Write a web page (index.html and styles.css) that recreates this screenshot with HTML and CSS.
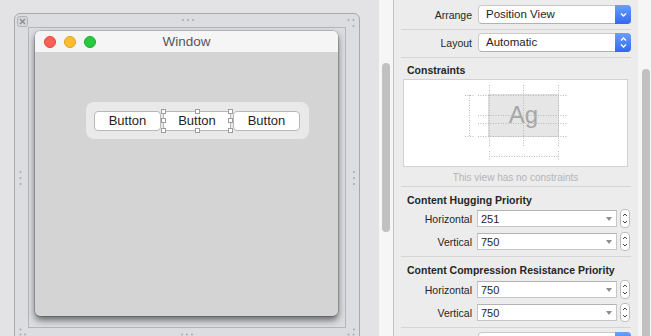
FILE: index.html
```html
<!DOCTYPE html>
<html>
<head>
<meta charset="utf-8">
<link rel="stylesheet" href="styles.css">
</head>
<body>
<div class="app">
  <div class="canvas">
    <div class="frame">
      <svg class="frame-marks" width="346" height="340" viewBox="0 0 346 340">
        <rect x="2.5" y="2.5" width="10" height="10" rx="2" fill="#d6d6d9" stroke="#b3b3b6"/>
        <path d="M5 5 L10 10 M10 5 L5 10" stroke="#8c8c8f" stroke-width="1.3"/>
        <g fill="#a9a9ad">
          <circle cx="168" cy="6" r="1"/><circle cx="173" cy="6" r="1"/><circle cx="178" cy="6" r="1"/>
          <circle cx="333.5" cy="6" r="1"/><circle cx="338.5" cy="6" r="1"/><circle cx="338.5" cy="12" r="1"/>
          <circle cx="5.5" cy="158" r="1"/><circle cx="5.5" cy="164" r="1"/><circle cx="5.5" cy="170" r="1"/>
          <circle cx="339" cy="158" r="1"/><circle cx="339" cy="164" r="1"/><circle cx="339" cy="170" r="1"/>
          <circle cx="5.5" cy="315.5" r="1"/><circle cx="339" cy="315.5" r="1"/>
          <circle cx="5.5" cy="320.5" r="1"/><circle cx="10" cy="320.5" r="1"/>
          <circle cx="167" cy="320.5" r="1"/><circle cx="172" cy="320.5" r="1"/><circle cx="177" cy="320.5" r="1"/>
          <circle cx="333.5" cy="320.5" r="1"/><circle cx="338.5" cy="320.5" r="1"/>
        </g>
      </svg>
      <div class="inner">
        <div class="window">
          <div class="titlebar">
            <div class="lights">
              <span class="light red"></span>
              <span class="light yellow"></span>
              <span class="light green"></span>
            </div>
            <div class="title">Window</div>
            <div></div>
          </div>
          <div class="wbody">
            <div class="group">
              <div class="btn">Button</div>
              <div class="btn mid selected">Button
                <span class="h tl"></span><span class="h tc"></span><span class="h tr"></span>
                <span class="h ml"></span><span class="h mr"></span>
                <span class="h bl"></span><span class="h bc"></span><span class="h br"></span>
              </div>
              <div class="btn">Button</div>
            </div>
          </div>
        </div>
      </div>
    </div>
  </div>

  <div class="vscroll left"><div class="thumb"></div></div>

  <div class="inspector">
    <div class="prow first">
      <div class="label">Arrange</div>
      <div class="popup">
        <div class="val">Position View</div>
        <div class="arrow">
          <svg width="11" height="13" viewBox="0 0 11 13"><path d="M3 5.5 L5.5 8 L8 5.5" fill="none" stroke="#fff" stroke-width="1.4"/></svg>
        </div>
      </div>
    </div>
    <div class="sep"></div>
    <div class="prow second">
      <div class="label">Layout</div>
      <div class="popup">
        <div class="val">Automatic</div>
        <div class="arrow">
          <svg width="11" height="15" viewBox="0 0 11 15"><path d="M3 5.5 L5.5 3 L8 5.5 M3 9.5 L5.5 12 L8 9.5" fill="none" stroke="#fff" stroke-width="1.4"/></svg>
        </div>
      </div>
    </div>
    <div class="sep"></div>

    <div class="section constraints">
      <div class="heading">Constraints</div>
      <div class="cbox">
        <svg width="223" height="86" viewBox="0 0 223 86">
          <rect x="84.5" y="14.5" width="70" height="42" fill="#e6e6e6" stroke="#c4c4c4" stroke-dasharray="1 1"/>
          <text x="119.5" y="43" font-family="Liberation Sans, sans-serif" font-size="24" fill="#a6a6a6" text-anchor="middle">Ag</text>
          <g stroke="#b9b9b9" stroke-dasharray="1 1.5" fill="none">
            <path d="M85.5 5 V67 M119.5 5 V67 M154.5 5 V67"/>
            <path d="M74 15.5 H164 M74 35.5 H164 M74 43.5 H164 M74 56.5 H164"/>
            <path d="M65.5 15 V57 M61 15.5 H70 M61 56.5 H70"/>
            <path d="M85 76.5 H155 M85.5 71 V80 M154.5 71 V80"/>
          </g>
        </svg>
      </div>
      <div class="caption">This view has no constraints</div>
    </div>
    <div class="sep"></div>

    <div class="section prio">
      <div class="heading">Content Hugging Priority</div>
      <div class="crow r1">
        <div class="label">Horizontal</div>
        <div class="combo"><span class="cval">251</span><span class="tri"></span></div>
        <div class="stepper"><svg width="10" height="19" viewBox="0 0 10 19"><rect x="0.5" y="0.5" width="9" height="18" rx="3.5" fill="#fff" stroke="#bdbdbd"/><path d="M3 7 L5 5 L7 7 M3 12 L5 14 L7 12" fill="none" stroke="#444" stroke-width="1"/></svg></div>
      </div>
      <div class="crow r2">
        <div class="label">Vertical</div>
        <div class="combo"><span class="cval">750</span><span class="tri"></span></div>
        <div class="stepper"><svg width="10" height="19" viewBox="0 0 10 19"><rect x="0.5" y="0.5" width="9" height="18" rx="3.5" fill="#fff" stroke="#bdbdbd"/><path d="M3 7 L5 5 L7 7 M3 12 L5 14 L7 12" fill="none" stroke="#444" stroke-width="1"/></svg></div>
      </div>
    </div>
    <div class="sep"></div>

    <div class="section prio comp">
      <div class="heading">Content Compression Resistance Priority</div>
      <div class="crow r1">
        <div class="label">Horizontal</div>
        <div class="combo"><span class="cval">750</span><span class="tri"></span></div>
        <div class="stepper"><svg width="10" height="19" viewBox="0 0 10 19"><rect x="0.5" y="0.5" width="9" height="18" rx="3.5" fill="#fff" stroke="#bdbdbd"/><path d="M3 7 L5 5 L7 7 M3 12 L5 14 L7 12" fill="none" stroke="#444" stroke-width="1"/></svg></div>
      </div>
      <div class="crow r2">
        <div class="label">Vertical</div>
        <div class="combo"><span class="cval">750</span><span class="tri"></span></div>
        <div class="stepper"><svg width="10" height="19" viewBox="0 0 10 19"><rect x="0.5" y="0.5" width="9" height="18" rx="3.5" fill="#fff" stroke="#bdbdbd"/><path d="M3 7 L5 5 L7 7 M3 12 L5 14 L7 12" fill="none" stroke="#444" stroke-width="1"/></svg></div>
      </div>
    </div>
    <div class="sep"></div>
    <div class="prow last">
      <div class="label"></div>
      <div class="popup">
        <div class="val"></div>
        <div class="arrow"></div>
      </div>
    </div>
  </div>

  <div class="vscroll right"><div class="thumb"></div></div>
</div>
</body>
</html>
```

FILE: styles.css
```css
* { box-sizing: border-box; }
html, body { margin: 0; padding: 0; }
body {
  width: 651px;
  height: 336px;
  overflow: hidden;
  font-family: "Liberation Sans", Arial, sans-serif;
  color: #262626;
}
.app {
  display: flex;
  width: 651px;
  height: 336px;
  overflow: hidden;
}

/* ---------- canvas ---------- */
.canvas {
  width: 379px;
  flex: none;
  background: #e3e3e6;
  padding: 13px 0 0 14px;
  overflow: hidden;
}
.frame {
  position: relative;
  width: 346px;
  height: 345px;
  background: #dcdde0;
  border: 1px solid #a9a9ac;
  border-radius: 6px 6px 0 0;
  padding: 13px 13px 0 13px;
}
.frame-marks {
  position: absolute;
  left: 0;
  top: 0;
}
.inner {
  width: 318px;
  height: 301px;
  border: 1px solid #b6b6b9;
  padding: 3px 0 0 6px;
}
.window {
  width: 303px;
  height: 285px;
  border-radius: 5px;
  background: #d4d4d4;
  box-shadow: 0 4px 7px rgba(0, 0, 0, 0.55), 0 0 0 0.5px rgba(0, 0, 0, 0.3);
  display: flex;
  flex-direction: column;
  overflow: hidden;
}
.titlebar {
  height: 21px;
  flex: none;
  background: #f5f5f5;
  display: grid;
  grid-template-columns: 1fr auto 1fr;
  align-items: center;
}
.lights {
  display: flex;
  gap: 8px;
  padding-left: 9px;
}
.light {
  width: 12px;
  height: 12px;
  border-radius: 50%;
}
.red { background: #fe5f57; border: 0.5px solid #e1443e; }
.yellow { background: #febc2e; border: 0.5px solid #dfa023; }
.green { background: #28c840; border: 0.5px solid #1bac2a; }
.title {
  font-size: 13.5px;
  color: #555;
}
.wbody {
  flex: 1;
  padding: 50px 0 0 51px;
}
.group {
  width: 223px;
  height: 37px;
  background: #e9e9e9;
  border-radius: 8px;
  display: flex;
  align-items: center;
  gap: 2px;
  padding-left: 8px;
}
.btn {
  position: relative;
  width: 67px;
  height: 20px;
  background: #fff;
  border: 1px solid #b8b8b8;
  border-radius: 4px;
  font-size: 13px;
  line-height: 18px;
  text-align: center;
  color: #1f1f1f;
}
.btn.mid { width: 68px; }
.h {
  position: absolute;
  width: 5px;
  height: 5px;
  background: #fff;
  border: 1px solid #9c9c9c;
}
.h.tl { left: -3px; top: -3px; }
.h.tc { left: 31px; top: -3px; }
.h.tr { right: -3px; top: -3px; }
.h.ml { left: -3px; top: 6px; }
.h.mr { right: -3px; top: 6px; }
.h.bl { left: -3px; bottom: -3px; }
.h.bc { left: 31px; bottom: -3px; }
.h.br { right: -3px; bottom: -3px; }

/* ---------- scrollbars ---------- */
.vscroll {
  flex: none;
  background: #f6f6f6;
}
.vscroll.left {
  width: 15px;
  border-right: 1px solid #c3c3c3;
  padding: 63px 0 0 3px;
}
.vscroll.left .thumb { height: 169px; }
.vscroll.right {
  width: 13px;
  padding: 69px 0 0 4px;
}
.vscroll.right .thumb { height: 300px; }
.thumb {
  width: 8px;
  background: #c1c1c1;
  border-radius: 4px;
}

/* ---------- inspector ---------- */
.inspector {
  width: 244px;
  flex: none;
  background: #ececec;
  overflow: hidden;
}
.sep {
  height: 1px;
  margin: 0 7px;
  background: #d5d5d5;
}
.label {
  width: 78px;
  flex: none;
  text-align: right;
  font-size: 10.5px;
  color: #262626;
}
.prow {
  display: flex;
  align-items: flex-start;
  gap: 6px;
}
.prow.first { height: 29px; padding-top: 5px; }
.prow.second { height: 27px; padding-top: 3px; }
.prow.last { height: 20px; padding-top: 4px; }
.prow .label { line-height: 20px; }
.popup {
  width: 153px;
  height: 19px;
  display: flex;
  background: #fff;
  border: 1px solid #c9c9c9;
  border-bottom-color: #b2b2b2;
  border-radius: 4px;
}
.popup .val {
  flex: 1;
  padding-left: 7px;
  font-size: 11.5px;
  line-height: 17px;
  color: #1e1e1e;
}
.popup .arrow {
  width: 16px;
  margin: -1px -1px -1px 0;
  background: linear-gradient(#6b9ffb, #3069f3);
  border-radius: 0 4px 4px 0;
  display: flex;
  align-items: center;
  justify-content: center;
}

.section { padding-top: 6px; }
.section.constraints { padding-top: 5px; }
.heading {
  padding-left: 13px;
  font-size: 10.5px;
  line-height: 14px;
  font-weight: bold;
  color: #262626;
}
.cbox {
  margin: 2px 10px 0 9px;
  height: 88px;
  background: #fff;
  border: 1px solid #d2d2d2;
}
.cbox svg { display: block; }
.caption {
  margin: 5px 10px 2px 9px;
  font-size: 10px;
  line-height: 12px;
  text-align: center;
  color: #b4b4b4;
}

.crow {
  display: flex;
  align-items: center;
  height: 17px;
}
.crow.r1 { margin-top: 3px; }
.crow.r2 { margin-top: 6px; margin-bottom: 6px; }
.comp .crow.r1 { margin-top: 4px; }
.crow .label { margin-right: 5px; }
.combo {
  width: 140px;
  height: 17px;
  background: #fff;
  border: 1px solid #c6c6c6;
  border-top-color: #b3b3b3;
  display: flex;
  align-items: center;
  justify-content: space-between;
  padding: 0 4px 0 3px;
}
.cval {
  font-size: 11px;
  color: #1e1e1e;
}
.tri {
  width: 0;
  height: 0;
  border-left: 3.5px solid transparent;
  border-right: 3.5px solid transparent;
  border-top: 4px solid #8d8d8d;
}
.stepper {
  margin-left: 3px;
  width: 10px;
  height: 19px;
}
.stepper svg { display: block; }
```
